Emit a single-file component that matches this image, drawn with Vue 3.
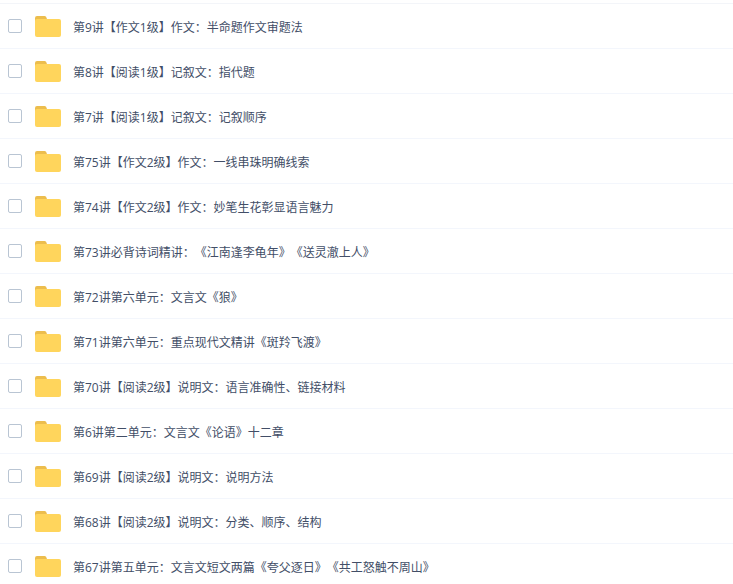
<script setup>
const items = [
  '第9讲【作文1级】作文：半命题作文审题法',
  '第8讲【阅读1级】记叙文：指代题',
  '第7讲【阅读1级】记叙文：记叙顺序',
  '第75讲【作文2级】作文：一线串珠明确线索',
  '第74讲【作文2级】作文：妙笔生花彰显语言魅力',
  '第73讲必背诗词精讲：《江南逢李龟年》《送灵澈上人》',
  '第72讲第六单元：文言文《狼》',
  '第71讲第六单元：重点现代文精讲《斑羚飞渡》',
  '第70讲【阅读2级】说明文：语言准确性、链接材料',
  '第6讲第二单元：文言文《论语》十二章',
  '第69讲【阅读2级】说明文：说明方法',
  '第68讲【阅读2级】说明文：分类、顺序、结构',
  '第67讲第五单元：文言文短文两篇《夸父逐日》《共工怒触不周山》',
]
</script>

<template>
  <div class="page">
    <ul class="list">
      <li v-for="item in items" :key="item" class="row">
        <span class="check"></span>
        <svg class="folder" width="26" height="21" viewBox="0 0 26 21">
          <path d="M0 6V2a2 2 0 0 1 2-2h7.5a2 2 0 0 1 1.6.8L12 3v3z" fill="#ecbd4d"/>
          <rect x="0" y="3" width="26" height="18" rx="2" fill="#ffd55c"/>
        </svg>
        <span class="name">{{ item }}</span>
      </li>
    </ul>
  </div>
</template>

<style>
html, body {
  margin: 0;
  background: #fff;
}
</style>

<style scoped>
.page {
  height: 584px;
  overflow: hidden;
  padding-top: 3px;
  box-sizing: border-box;
}

.list {
  list-style: none;
  margin: 0;
  padding: 0;
  border-top: 1px solid #f3f5f9;
}

.row {
  display: flex;
  align-items: center;
  height: 44px;
  border-bottom: 1px solid #f3f6fc;
  padding-left: 8px;
}

.check {
  width: 14px;
  height: 14px;
  border: 1px solid #b9c5d3;
  border-radius: 2px;
  box-sizing: border-box;
  background: #fff;
}

.folder {
  margin-left: 13px;
  flex: none;
}

.name {
  margin-left: 12px;
  margin-top: 3px;
  font-family: "Open Sans", "Noto Sans CJK SC", sans-serif;
  font-size: 12px;
  line-height: 16px;
  color: #424e67;
  white-space: nowrap;
  text-spacing-trim: space-all;
}
</style>
